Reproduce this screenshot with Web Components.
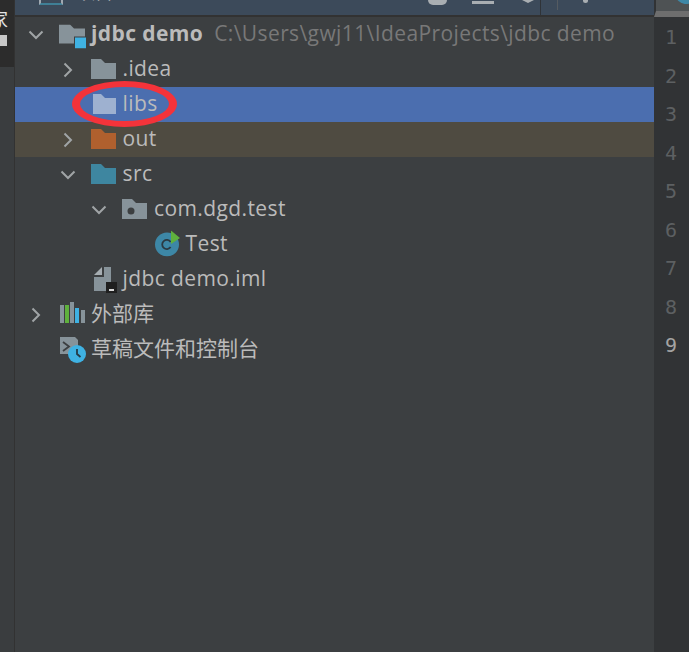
<!DOCTYPE html>
<html>
<head>
<meta charset="utf-8">
<title>jdbc demo</title>
<style>
html, body { margin: 0; height: 100%; background: #3c3f41; overflow: hidden; }
body { font-family: "Open Sans", "Noto Sans CJK SC", sans-serif; }
</style>
</head>
<body>
<ide-window>
  <project-tree></project-tree>
  <line-gutter></line-gutter>
</ide-window>

<script>
const ICONS = {
  folder: `<svg width="25" height="20" viewBox="0 0 25 20"><path d="M0 0h10l4 4h11v16H0z" fill="#87939a"/></svg>`,
  excluded: `<svg width="25" height="20" viewBox="0 0 25 20"><path d="M0 0h10l4 4h11v16H0z" fill="#b0602e"/></svg>`,
  source: `<svg width="25" height="20" viewBox="0 0 25 20"><path d="M0 0h10l4 4h11v16H0z" fill="#3e86a0"/></svg>`,
  selected: `<svg width="25" height="20" viewBox="0 0 25 20"><path d="M2 0h8l4 4h11v16H2z" fill="#9eb1d0"/></svg>`,
  module: `<svg width="28" height="24" viewBox="0 0 28 24"><path d="M0 0h11l4 4h11v15H0z" fill="#87939a"/><rect x="15" y="12" width="13" height="12" fill="#3c3f41"/><rect x="16" y="13" width="11" height="11" fill="#3fb2e3"/></svg>`,
  pkg: `<svg width="25" height="20" viewBox="0 0 25 20"><path d="M0 0h10l4 4h11v16H0z" fill="#87939a"/><circle cx="9" cy="12" r="3.500" fill="#3c3f41"/></svg>`,
  cls: `<svg width="27" height="26" viewBox="0 0 27 26"><circle cx="13" cy="14" r="12" fill="#3d87a6"/><path d="M16.600 11.400a4.600 4.600 0 1 0 0 5.200" fill="none" stroke="#2b3a42" stroke-width="1.800"/><path d="M17 0l9 7.500-9 6z" fill="#5fb13d"/></svg>`,
  iml: `<svg width="23" height="26" viewBox="0 0 23 26"><path d="M0 8L8 0v8z" fill="#a6adb2"/><path d="M10 0h7v15h-5v9H0V10h10z" fill="#87939a"/><rect x="12" y="15" width="11" height="11" fill="#1f1f1f"/><rect x="15" y="22" width="5" height="2" fill="#d8d8d8"/></svg>`,
  lib: `<svg width="25" height="21" viewBox="0 0 25 21"><rect x="0" y="3" width="4" height="18" fill="#87939a"/><rect x="5" y="3" width="4" height="18" fill="#5fb13d"/><rect x="10" y="0" width="4" height="21" fill="#87939a"/><rect x="15" y="6" width="4" height="15" fill="#3fb2e3"/><rect x="21" y="8" width="4" height="13" fill="#87939a"/></svg>`,
  scratch: `<svg width="27" height="26" viewBox="0 0 27 26"><path d="M0 0h15l3 3v14H0z" fill="#87939a"/><path d="M3 5l6 4.500-6 4.500" fill="none" stroke="#3c3f41" stroke-width="1.800"/><circle cx="17" cy="17" r="9" fill="#3fb2e3"/><path d="M17 12v5l3.500 3" fill="none" stroke="#243a46" stroke-width="1.800"/></svg>`
};

// nudges for icons that don't sit on the row's centre line: [x, y]
const ICON_SHIFT = {
  folder: [0, -1], excluded: [0, -1], source: [0, -1], selected: [0, -1], pkg: [0, -1],
  module: [0, 1.500], cls: [0, -1.500], iml: [3, 0], lib: [1, -2], scratch: [1, 0]
};

const CHEVRONS = {
  open: `<svg width="16" height="10" viewBox="0 0 16 10"><path d="M1.500 1.500L8 8l6.500-6.500" fill="none" stroke="#a0a4a6" stroke-width="2"/></svg>`,
  closed: `<svg width="10" height="16" viewBox="0 0 10 16"><path d="M1.500 1.500L8 8l-6.500 6.500" fill="none" stroke="#a0a4a6" stroke-width="2"/></svg>`
};

class IdeWindow extends HTMLElement {
  constructor() {
    super();
    this.attachShadow({ mode: 'open' }).innerHTML = `
      <style>
        :host { display: grid; grid-template-columns: 15px 1fr 35px; grid-template-rows: 17px 1fr; width: 689px; height: 652px; background: #3c3f41; }
        .strip { grid-row: 1 / 3; background: #3a3d3f; border-right: 1px solid #323232; box-sizing: border-box; }
        .strip-top { height: 67px; background: #2c2c2c; color: #e4e4e4; font: 18px/20px "Noto Sans CJK SC", sans-serif; overflow: hidden; display: flex; flex-direction: column; }
        .strip-top span { margin: 8px 0 0 -10px; height: 20px; }
        .strip-top i { display: block; width: 7px; height: 11px; background: #c8c8c8; margin-top: 7px; }
        .head { background: #3c4a5a; border-bottom: 2px solid #323232; box-sizing: border-box; position: relative; overflow: hidden; }
        .win { position: absolute; left: 24px; top: -8px; width: 24px; height: 13px; border: 2px solid #a0a8b0; border-bottom-color: #3f7f96; box-sizing: border-box; }
        .label { position: absolute; left: 62px; top: -21px; font: 18px/24px "Noto Sans CJK SC", sans-serif; color: #bbb; }
        .tool { position: absolute; background: #a9aeb2; }
        .line { position: absolute; top: 0; width: 1px; background: #2f3338; }
        .tabs { background: #4e5254; border-bottom: 6px solid #6e6e6e; border-left: 2px solid #313335; box-sizing: border-box; position: relative; overflow: hidden; }
        .tabs i { position: absolute; left: 19px; top: -17px; width: 24px; height: 21px; border-radius: 50%; background: #3d87a6; }
        .tree { background: #3c3f41; min-width: 0; }
        .gutter { background: #313335; min-width: 0; }
      </style>
      <div class="strip"><div class="strip-top"><span>家</span><i></i></div></div>
      <div class="head">
        <span class="win"></span><span class="label">项目</span>
        <b class="tool" style="left:413px;top:0;width:19px;height:5px;border-radius:0 0 10px 10px"></b>
        <b class="tool" style="left:457px;top:1px;width:22px;height:3px"></b>
        <b class="tool" style="left:507px;top:0;width:12px;height:3px;clip-path:polygon(0 0,100% 0,50% 100%)"></b>
        <b class="line" style="left:525px;height:15px"></b>
        <b class="line" style="left:542px;height:10px;background:#555b61"></b>
        <b class="tool" style="left:568px;top:0;width:5px;height:3px;border-radius:0 0 3px 3px"></b>
      </div>
      <div class="tabs"><i></i></div>
      <div class="tree"><slot name="tree"></slot></div>
      <div class="gutter"><slot name="gutter"></slot></div>`;
  }
  connectedCallback() {
    this.querySelector('project-tree').slot = 'tree';
    this.querySelector('line-gutter').slot = 'gutter';
  }
}

class TreeRow extends HTMLElement {
  constructor() {
    super();
    this.attachShadow({ mode: 'open' }).innerHTML = `
      <style>
        :host { display: flex; height: 35px; align-items: center; white-space: nowrap; color: #bbbbbb; font-size: 21px; letter-spacing: 0.4px; }
        :host([cjk]) { letter-spacing: 0; }
        :host([state="selected"]) { background: #4b6eaf; }
        :host([state="excluded"]) { background: #4f4b41; }
        .arrow { width: 20px; display: flex; justify-content: center; flex: none; margin-right: 13px; }
        .icon { display: flex; flex: none; width: 32px; }
        .name { margin-top: -4px; }
        :host([cjk]) .name { margin-top: -6px; }
        .name[strong] { font-weight: 700; }
        .hint { color: #787878; margin: -4px 0 0 11px; }
      </style>
      <span class="arrow"></span><span class="icon"></span><span class="name"></span><span class="hint"></span>`;
  }
  connectedCallback() {
    const root = this.shadowRoot;
    const depth = Number(this.getAttribute('depth') || 0);
    const icon = this.getAttribute('icon');
    const [dx, dy] = ICON_SHIFT[icon];
    root.querySelector('.arrow').style.marginLeft = (11 + depth * 31.5) + 'px';
    root.querySelector('.arrow').innerHTML = CHEVRONS[this.getAttribute('arrow')] || '';
    root.querySelector('.icon').innerHTML = ICONS[icon];
    root.querySelector('.icon svg').style.transform = `translate(${dx}px, ${dy}px)`;
    root.querySelector('.name').textContent = this.getAttribute('name');
    if (this.hasAttribute('strong')) root.querySelector('.name').setAttribute('strong', '');
    root.querySelector('.hint').textContent = this.getAttribute('hint') || '';
  }
}

class ProjectTree extends HTMLElement {
  constructor() {
    super();
    this.attachShadow({ mode: 'open' }).innerHTML = `
      <style>
        :host { display: block; position: relative; }
        .mark { position: absolute; left: 57px; top: 64px; width: 105px; height: 46px; border: solid #f4333a; border-width: 6px 8px; border-radius: 50%; box-sizing: border-box; }
      </style>
      <tree-row depth="0" arrow="open" icon="module" name="jdbc demo" strong hint="C:\\Users\\gwj11\\IdeaProjects\\jdbc demo"></tree-row>
      <tree-row depth="1" arrow="closed" icon="folder" name=".idea"></tree-row>
      <tree-row depth="1" icon="selected" name="libs" state="selected"></tree-row>
      <tree-row depth="1" arrow="closed" icon="excluded" name="out" state="excluded"></tree-row>
      <tree-row depth="1" arrow="open" icon="source" name="src"></tree-row>
      <tree-row depth="2" arrow="open" icon="pkg" name="com.dgd.test"></tree-row>
      <tree-row depth="3" icon="cls" name="Test"></tree-row>
      <tree-row depth="1" icon="iml" name="jdbc demo.iml"></tree-row>
      <tree-row depth="0" arrow="closed" icon="lib" name="外部库" cjk></tree-row>
      <tree-row depth="0" icon="scratch" name="草稿文件和控制台" cjk></tree-row>
      <div class="mark"></div>`;
  }
}

class LineGutter extends HTMLElement {
  constructor() {
    super();
    const nums = [1, 2, 3, 4, 5, 6, 7, 8, 9].map(n => `<div class="${n === 9 ? 'on' : ''}">${n}</div>`).join('');
    this.attachShadow({ mode: 'open' }).innerHTML = `
      <style>
        :host { display: block; padding: 1px 0 0 11px; font: 20px/38.500px "DejaVu Sans Mono", monospace; color: #5d6062; }
        .on { color: #a4a3a3; }
      </style>${nums}`;
  }
}

customElements.define('tree-row', TreeRow);
customElements.define('project-tree', ProjectTree);
customElements.define('line-gutter', LineGutter);
customElements.define('ide-window', IdeWindow);
</script>
</body>
</html>
